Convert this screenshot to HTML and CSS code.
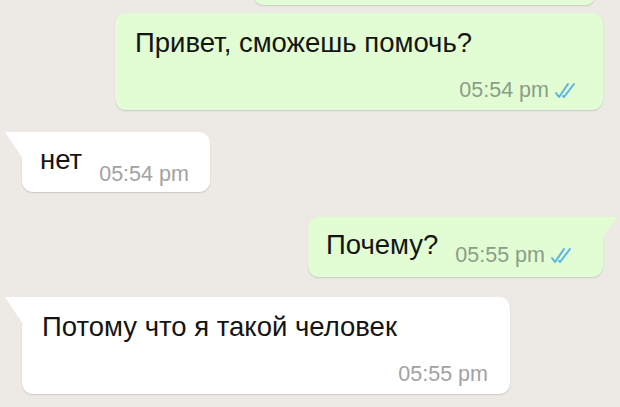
FILE: index.html
```html
<!DOCTYPE html>
<html lang="ru">
<head>
<meta charset="utf-8">
<title>Чат</title>
<link rel="stylesheet" href="styles.css">
</head>
<body>
<main class="chat">
  <div class="bubble bubble--out bubble--cut"></div>

  <div class="bubble bubble--out bubble--block bubble--first">
    <p class="text">Привет, сможешь помочь?</p>
    <div class="meta">
      <span class="time">05:54 pm</span>
      <svg class="ticks" viewBox="0 0 24 18" width="24" height="18" aria-hidden="true">
        <path d="M2 11 L5 15 L14 2" />
        <path d="M9 14 L10 15 L20 2" />
      </svg>
    </div>
  </div>

  <div class="bubble bubble--in bubble--inline bubble--tail bubble--second">
    <p class="text">нет</p>
    <span class="time time--low">05:54 pm</span>
  </div>

  <div class="bubble bubble--out bubble--inline bubble--tail bubble--third">
    <p class="text">Почему?</p>
    <div class="meta meta--inline">
      <span class="time">05:55 pm</span>
      <svg class="ticks" viewBox="0 0 24 18" width="24" height="18" aria-hidden="true">
        <path d="M2 11 L5 15 L14 2" />
        <path d="M9 14 L10 15 L20 2" />
      </svg>
    </div>
  </div>

  <div class="bubble bubble--in bubble--block bubble--tail bubble--fourth">
    <p class="text">Потому что я такой человек</p>
    <div class="meta">
      <span class="time">05:55 pm</span>
    </div>
  </div>
</main>
</body>
</html>
```

FILE: styles.css
```css
html, body {
  margin: 0;
  padding: 0;
  height: 100%;
  overflow: hidden;
}

body {
  background: #ede9e5;
  font-family: "Liberation Sans", Arial, sans-serif;
  color: #141414;
}

.chat {
  display: flex;
  flex-direction: column;
}

.bubble {
  position: relative;
  border-radius: 11px;
  box-shadow: 0 1px 1.5px rgba(0, 0, 0, 0.14);
  box-sizing: border-box;
}

.bubble--out {
  align-self: flex-end;
  background: #e2fcd3;
  margin-right: 17px;
}

.bubble--in {
  align-self: flex-start;
  background: #ffffff;
  margin-left: 22px;
}

.bubble--cut {
  height: 40px;
  width: 343px;
  margin-top: -35px;
  margin-right: 24px;
}

.text {
  margin: 0;
  font-size: 27.5px;
  line-height: 32px;
  white-space: nowrap;
}

.time {
  font-size: 21.5px;
  line-height: 24px;
  white-space: nowrap;
}

.bubble--out .time {
  color: #8c9d88;
}

.bubble--in .time {
  color: #a2a2a2;
}

.ticks {
  fill: none;
  stroke: #58b6e2;
  stroke-width: 2;
  stroke-linecap: round;
  stroke-linejoin: round;
  margin-left: 5px;
  margin-bottom: 2px;
}

/* multi-line bubbles */
.bubble--block {
  width: 488px;
  padding: 14px 22px 8px 20px;
}

.bubble--block .meta {
  display: flex;
  justify-content: flex-end;
  align-items: flex-end;
  margin-top: 19px;
}

.bubble--first {
  margin-top: 8px;
  padding-right: 25px;
}

/* single-row bubbles */
.bubble--inline {
  display: flex;
  align-items: flex-start;
  padding: 12px 21px 6px 18px;
  height: 60px;
}

.bubble--inline > .time,
.bubble--inline > .meta {
  margin-left: 17px;
}

.time--low {
  padding-top: 18px;
}

.meta--inline {
  display: flex;
  align-items: flex-end;
  padding-top: 14px;
}

.bubble--second {
  margin-top: 22px;
}

.bubble--third {
  margin-top: 25px;
  padding-right: 29px;
}

.bubble--fourth {
  margin-top: 20px;
}

/* tails */
.bubble--tail.bubble--in {
  border-top-left-radius: 0;
}

.bubble--tail.bubble--in::before {
  content: "";
  position: absolute;
  top: 0;
  left: -17px;
  width: 18px;
  height: 27px;
  background: #ffffff;
  clip-path: polygon(0 0, 100% 0, 100% 100%);
}

.bubble--tail.bubble--out {
  border-top-right-radius: 0;
}

.bubble--tail.bubble--out::after {
  content: "";
  position: absolute;
  top: 0;
  right: -14px;
  width: 15px;
  height: 22px;
  background: #e2fcd3;
  clip-path: polygon(0 0, 100% 0, 0 100%);
}
```
